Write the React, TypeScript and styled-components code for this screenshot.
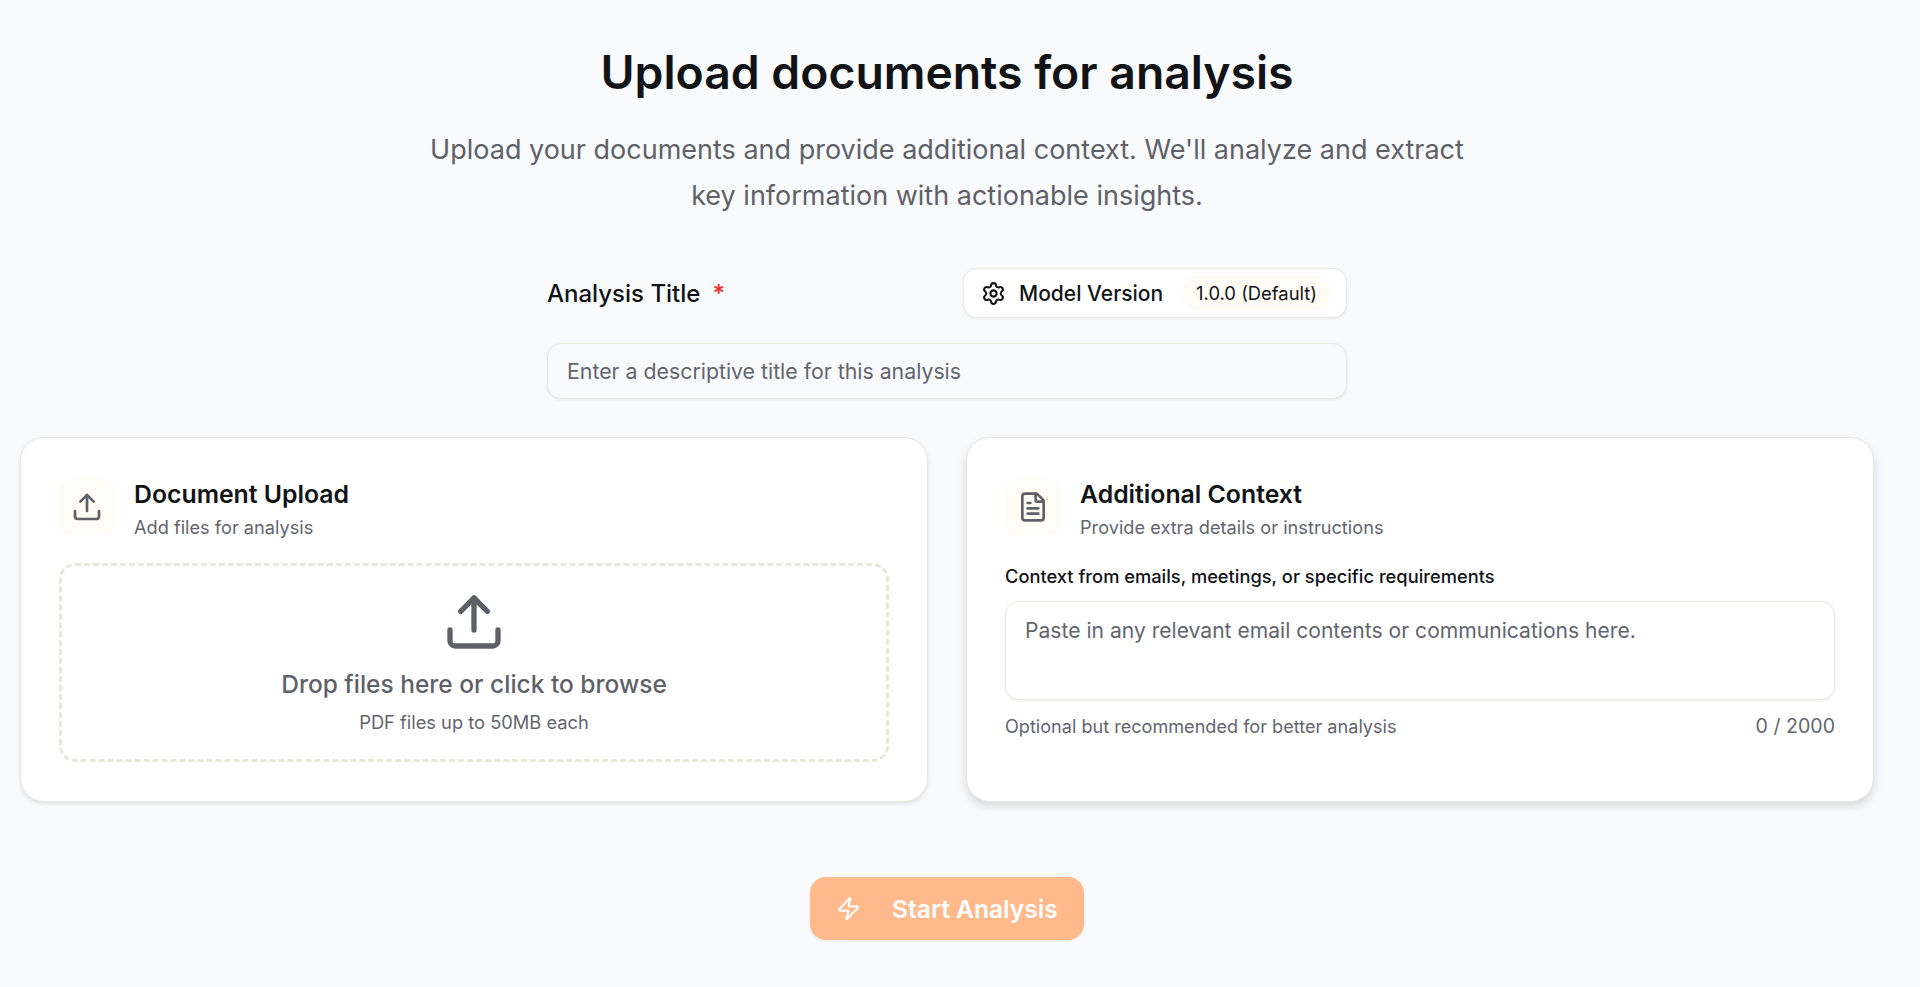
import React from "react";
import styled, { createGlobalStyle } from "styled-components";
import { FileText, Settings, Upload, Zap } from "lucide-react";

const GlobalStyle = createGlobalStyle`
  html, body {
    margin: 0;
    background: #f9fafb;
  }
  body {
    font-family: Inter, "Liberation Sans", sans-serif;
    color: #111317;
  }
  * {
    box-sizing: border-box;
  }
`;

const Page = styled.main`
  width: 1894px;
  min-height: 987px;
  padding: 42px 20px 0;
  display: flex;
  flex-direction: column;
  align-items: center;
`;

const Title = styled.h1`
  margin: 0;
  font-size: 46.3px;
  line-height: 60px;
  font-weight: 600;
  color: #111317;
`;

const Subtitle = styled.p`
  margin: 25px 0 0;
  width: 1100px;
  text-align: center;
  font-size: 27px;
  line-height: 46px;
  font-weight: 400;
  color: #5f6168;
`;

const TitleField = styled.section`
  width: 800px;
  margin-top: 49px;
  display: flex;
  flex-direction: column;
  gap: 25px;
`;

const TitleRow = styled.div`
  display: flex;
  align-items: center;
  justify-content: space-between;
`;

const TitleLabel = styled.label`
  font-size: 24px;
  font-weight: 500;
  color: #111317;
`;

const Required = styled.span`
  color: #ef2b2b;
  margin-left: 12px;
`;

const ModelPill = styled.div`
  width: 384px;
  height: 50px;
  padding: 0 16px 0 17px;
  display: flex;
  align-items: center;
  background: #ffffff;
  border: 1px solid #ebe8e0;
  border-radius: 14px;
  box-shadow: 0 1px 3px rgba(0, 0, 0, 0.08);
  font-size: 21px;
  font-weight: 500;
`;

const ModelName = styled.span`
  margin-left: 13px;
`;

const VersionBadge = styled.span`
  margin-left: auto;
  padding: 0 13px;
  height: 34px;
  display: flex;
  align-items: center;
  background: #fffbf5;
  border-radius: 14px;
  font-size: 18.4px;
  font-weight: 400;
`;

const TitleInput = styled.input`
  width: 100%;
  height: 56px;
  padding: 0 19px;
  background: #f9fafb;
  border: 1px solid #ebe8e0;
  border-radius: 14px;
  box-shadow: 0 1px 3px rgba(0, 0, 0, 0.08);
  font-family: inherit;
  font-size: 21.3px;
  &::placeholder {
    color: #63656c;
    opacity: 1;
  }
`;

const CardGrid = styled.section`
  width: 100%;
  margin-top: 38px;
  display: grid;
  grid-template-columns: 1fr 1fr;
  gap: 38px;
`;

const Card = styled.article<{ $raised?: boolean }>`
  height: 365px;
  padding: 41px 38px 0;
  background: #ffffff;
  border: 1px solid #ebe8e0;
  border-radius: 24px;
  box-shadow: ${({ $raised }) =>
    $raised ? "0 4px 10px rgba(0, 0, 0, 0.14)" : "0 2px 4px rgba(0, 0, 0, 0.1)"};
`;

const CardHeader = styled.header`
  display: flex;
  gap: 19px;
`;

const IconBox = styled.div`
  width: 56px;
  height: 56px;
  flex-shrink: 0;
  display: flex;
  align-items: center;
  justify-content: center;
  background: #fffbf5;
  border-radius: 14px;
  color: #5f6168;
`;

const CardTitle = styled.h2`
  margin: 0;
  font-size: 24.8px;
  line-height: 30px;
  font-weight: 600;
  color: #111317;
`;

const CardSubtitle = styled.p`
  margin: 5px 0 0;
  font-size: 18.2px;
  line-height: 26px;
  color: #63656c;
`;

const DropZone = styled.div`
  height: 199px;
  margin-top: 23px;
  display: flex;
  flex-direction: column;
  align-items: center;
  padding-top: 24px;
  border: 3px dashed #e9e7dd;
  border-radius: 16px;
  color: #5f6168;
`;

const DropTitle = styled.p`
  margin: 14px 0 0;
  font-size: 24.5px;
  line-height: 32px;
  font-weight: 500;
  color: #5f6168;
`;

const DropHint = styled.p`
  margin: 10px 0 0;
  font-size: 18.3px;
  line-height: 24px;
  color: #63656c;
`;

const ContextLabel = styled.label`
  display: block;
  margin-top: 24px;
  font-size: 18.3px;
  line-height: 24px;
  font-weight: 500;
  color: #111317;
`;

const ContextArea = styled.textarea`
  display: block;
  width: 100%;
  height: 99px;
  margin-top: 13px;
  padding: 15px 19px;
  resize: none;
  background: #ffffff;
  border: 1px solid #ebe8e0;
  border-radius: 14px;
  box-shadow: 0 1px 3px rgba(0, 0, 0, 0.08);
  font-family: inherit;
  font-size: 21.1px;
  line-height: 28px;
  &::placeholder {
    color: #63656c;
    opacity: 1;
  }
`;

const ContextFooter = styled.div`
  margin-top: 13px;
  display: flex;
  justify-content: space-between;
  align-items: center;
  font-size: 18.1px;
  line-height: 26px;
  color: #63656c;
`;

const CharCount = styled.span`
  font-size: 19.6px;
`;

const StartButton = styled.button`
  width: 274px;
  height: 63px;
  margin-top: 75px;
  padding: 0 26px;
  display: flex;
  align-items: center;
  gap: 31px;
  background: #ffb98a;
  border: none;
  border-radius: 16px;
  box-shadow: 0 1px 3px rgba(0, 0, 0, 0.08);
  color: #ffffff;
  font-family: inherit;
  font-size: 24.6px;
  font-weight: 600;
  white-space: nowrap;
`;

const App: React.FC = () => {
  return (
    <>
      <GlobalStyle />
      <Page>
        <Title>Upload documents for analysis</Title>
        <Subtitle>
          Upload your documents and provide additional context. We'll analyze and extract
          <br />
          key information with actionable insights.
        </Subtitle>

        <TitleField>
          <TitleRow>
            <TitleLabel>
              Analysis Title<Required>*</Required>
            </TitleLabel>
            <ModelPill>
              <Settings size={25} />
              <ModelName>Model Version</ModelName>
              <VersionBadge>1.0.0 (Default)</VersionBadge>
            </ModelPill>
          </TitleRow>
          <TitleInput placeholder="Enter a descriptive title for this analysis" />
        </TitleField>

        <CardGrid>
          <Card>
            <CardHeader>
              <IconBox>
                <Upload size={32} />
              </IconBox>
              <div>
                <CardTitle>Document Upload</CardTitle>
                <CardSubtitle>Add files for analysis</CardSubtitle>
              </div>
            </CardHeader>
            <DropZone>
              <Upload size={64} />
              <DropTitle>Drop files here or click to browse</DropTitle>
              <DropHint>PDF files up to 50MB each</DropHint>
            </DropZone>
          </Card>

          <Card $raised>
            <CardHeader>
              <IconBox>
                <FileText size={32} />
              </IconBox>
              <div>
                <CardTitle>Additional Context</CardTitle>
                <CardSubtitle>Provide extra details or instructions</CardSubtitle>
              </div>
            </CardHeader>
            <ContextLabel>Context from emails, meetings, or specific requirements</ContextLabel>
            <ContextArea placeholder="Paste in any relevant email contents or communications here." />
            <ContextFooter>
              <span>Optional but recommended for better analysis</span>
              <CharCount>0 / 2000</CharCount>
            </ContextFooter>
          </Card>
        </CardGrid>

        <StartButton type="button">
          <Zap size={25} />
          Start Analysis
        </StartButton>
      </Page>
    </>
  );
};

export default App;
